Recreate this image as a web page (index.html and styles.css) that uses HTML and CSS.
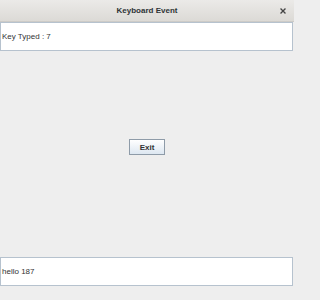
FILE: index.html
```html
<!DOCTYPE html>
<html>
<head>
<meta charset="utf-8">
<link rel="stylesheet" href="styles.css">
</head>
<body>
<div class="window">
  <div class="titlebar">
    <span class="title">Keyboard Event</span>
    <span class="close">
      <svg width="6" height="6" viewBox="0 0 6 6"><path d="M1 1L5 5M5 1L1 5" stroke="#444444" stroke-width="1.3" stroke-linecap="square"/></svg>
    </span>
  </div>
  <div class="field">Key Typed : 7</div>
  <div class="middle">
    <button class="btn">Exit</button>
  </div>
  <div class="field">hello 187</div>
</div>
</body>
</html>
```

FILE: styles.css
```css
html, body {
  margin: 0;
  padding: 0;
}
body {
  width: 294px;
  height: 300px;
  overflow: hidden;
  background: #eeeeee;
  font-family: "Liberation Sans", Arial, sans-serif;
}
.window {
  display: flex;
  flex-direction: column;
  width: 294px;
  height: 300px;
}
.titlebar {
  position: relative;
  height: 21px;
  background: linear-gradient(#ebeae8, #dcdad6);
  border-bottom: 1px solid #cdcbc7;
  display: flex;
  align-items: center;
  justify-content: center;
  flex-shrink: 0;
}
.title {
  font-weight: bold;
  font-size: 8px;
  color: #2e3436;
}
.close {
  position: absolute;
  right: 8px;
  top: 8px;
  width: 6px;
  height: 6px;
  display: flex;
}
.field {
  box-sizing: border-box;
  height: 29px;
  width: 293px;
  background: #ffffff;
  border: 1px solid #b6c2ce;
  display: flex;
  align-items: center;
  padding-left: 1px;
  font-size: 8px;
  color: #333333;
  flex-shrink: 0;
}
.middle {
  height: 206px;
  display: flex;
  justify-content: center;
  align-items: flex-start;
  flex-shrink: 0;
}
.btn {
  margin-top: 88px;
  margin-left: 0;
  box-sizing: border-box;
  width: 36px;
  height: 16px;
  padding: 0;
  border: 1px solid #8e9ba8;
  background: linear-gradient(#ffffff, #dde7f1);
  font-family: "Liberation Sans", Arial, sans-serif;
  font-weight: bold;
  font-size: 8px;
  color: #333333;
  display: flex;
  align-items: center;
  justify-content: center;
}
```
